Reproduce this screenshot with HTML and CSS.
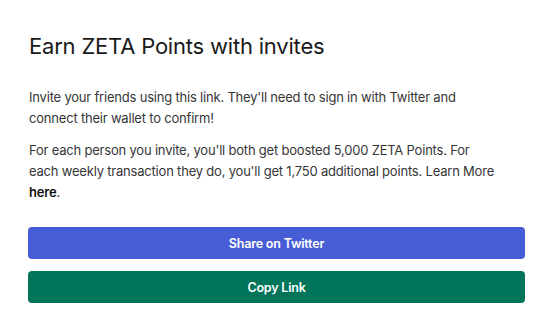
FILE: index.html
```html
<!DOCTYPE html>
<html lang="en">
<head>
    <meta charset="UTF-8">
    <meta name="viewport" content="width=device-width, initial-scale=1.0">
    <title>Earn ZETA Points with invites</title>
    <link rel="stylesheet" href="styles.css">
</head>
<body>
    <div class="modal">
        <h1 class="modal-title">Earn ZETA Points with invites</h1>
        <p class="modal-text">Invite your friends using this link. They'll need to sign in with Twitter and<br>connect their wallet to confirm!</p>
        <p class="modal-text">For each person you invite, you'll both get boosted 5,000 ZETA Points. For<br>each weekly transaction they do, you'll get 1,750 additional points. Learn More<br><a href="#" class="learn-link">here</a>.</p>
        <div class="button-stack">
            <button class="action-button twitter-button">Share on Twitter</button>
            <button class="action-button copy-button">Copy Link</button>
        </div>
    </div>
</body>
</html>
```

FILE: styles.css
```css
body, html {
    margin: 0;
    padding: 0;
    background: #ffffff;
    font-family: 'Inter', 'Roboto', sans-serif;
    color: #1a1a1a;
}

.modal {
    padding: 33px 23px 0 29px;
}

.modal-title {
    font-size: 22px;
    font-weight: 400;
    letter-spacing: -0.2px;
    margin: 0 0 28px 0;
    line-height: 26px;
}

.modal-text {
    font-size: 13px;
    line-height: 21px;
    color: #363636;
    margin: 0 0 10px 0;
    letter-spacing: -0.2px;
    white-space: nowrap;
}

.modal-text + .modal-text {
    margin-top: 11px;
}

.learn-link {
    color: #111111;
    font-weight: 600;
    text-decoration: none;
}

.button-stack {
    display: flex;
    flex-direction: column;
    gap: 12px;
    margin: 24px 0 0 -1px;
}

.action-button {
    height: 32px;
    border: none;
    border-radius: 4px;
    color: #ffffff;
    font-family: inherit;
    font-size: 12.5px;
    font-weight: 600;
    letter-spacing: -0.2px;
    cursor: pointer;
}

.twitter-button {
    background-color: #475dd6;
}

.copy-button {
    background-color: #007559;
}
```
